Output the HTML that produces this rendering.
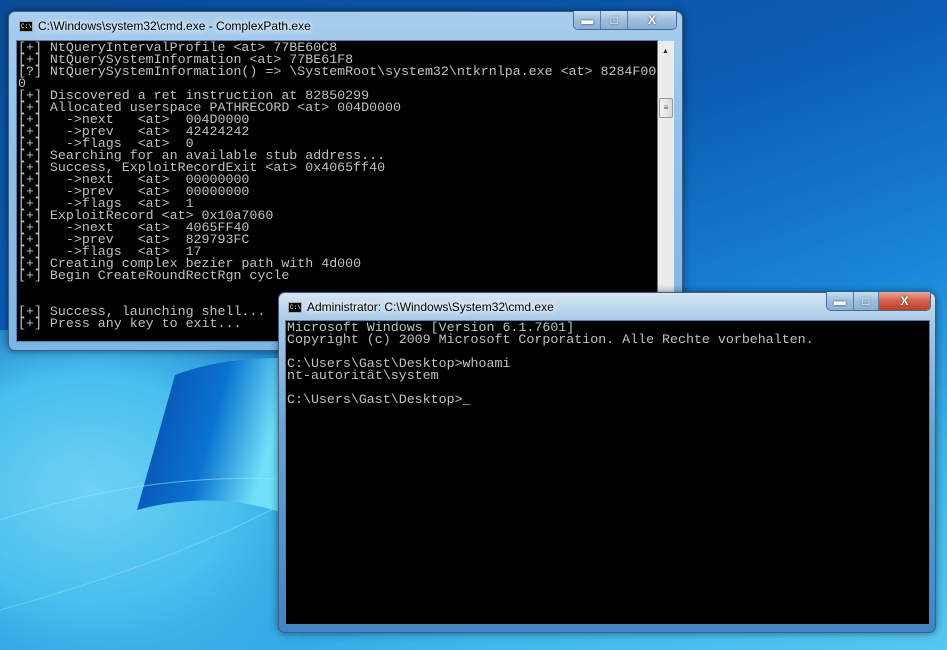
<!DOCTYPE html>
<html><head><meta charset="utf-8"><style>
*{margin:0;padding:0;box-sizing:border-box}
body{width:947px;height:650px;overflow:hidden;position:relative;
background:linear-gradient(160deg,#0a4c98 0%,#0b5cb4 35%,#1a86d8 60%,#3ab4ea 80%,#56c8f0 100%);font-family:"Liberation Sans",sans-serif}
.bgl{position:absolute;left:0;top:330px;width:300px;height:320px;background:radial-gradient(ellipse at 30% 50%,#6fd2f4 0%,#48bfee 50%,rgba(40,160,230,0) 100%)}
.win{position:absolute;border-radius:7px;border:1px solid #3d5f82;box-shadow:0 0 8px rgba(0,0,0,.5)}
.title{position:absolute;font-size:12px;color:#000;white-space:nowrap;text-shadow:0 0 6px #fff,0 0 8px #fff}
.ico{position:absolute;width:14px;height:11px;background:#000;border:1px solid #aaa;font-size:6px;color:#fff;line-height:9px;padding-left:1px;font-family:"Liberation Mono",monospace}
.con{position:absolute;background:#000;border:1px solid #5d7fa3;font-family:"Liberation Mono",monospace;font-size:13.3px;line-height:12px;color:#c0c0c0;white-space:pre;overflow:hidden;padding:1px 0 0 1px;letter-spacing:0}
.btns{position:absolute;height:19px;border:1px solid #4a6c90;border-top:none;border-radius:0 0 5px 5px;display:flex;overflow:hidden}
.btns div{height:18px;border-right:1px solid #5a7ea2;background:linear-gradient(#c9dcef,#9ebedf 50%,#8ab0d6);display:flex;align-items:center;justify-content:center;font-size:12px;font-weight:bold;color:#fff;text-shadow:0 0 2px #333}
.btns div:last-child{border-right:none}
</style></head><body>
<div class="bgl"></div>
<svg style="position:absolute;left:0;top:0" width="947" height="650">
<defs><linearGradient id="fl" x1="0" y1="0" x2="1" y2="0.3"><stop offset="0" stop-color="#0748a8"/><stop offset="0.6" stop-color="#0a72d0"/><stop offset="1" stop-color="#6ee0f8"/></linearGradient></defs>
<path d="M175 375 Q220 358 280 358 L280 512 Q210 490 137 510 Z" fill="url(#fl)"/>
<path d="M0 520 Q150 470 300 480" stroke="#9fe0f8" stroke-width="1" fill="none" opacity=".6"/>
<path d="M0 610 Q180 560 290 500" stroke="#9fe0f8" stroke-width="1" fill="none" opacity=".5"/>
</svg>

<!-- window 1 -->
<div class="win" style="left:8px;top:11px;width:675px;height:340px;background:linear-gradient(180deg,#a8cdee,#8ec0ea 40%,#7cb6e6)"></div>
<div class="ico" style="left:19px;top:21px">C:\</div>
<div class="title" style="left:38px;top:19px">C:\Windows\system32\cmd.exe - ComplexPath.exe</div>
<div class="btns" style="left:573px;top:11px;width:104px"><div style="width:28px">▬</div><div style="width:27px">□</div><div style="width:49px">X</div></div>
<div class="con" style="left:16px;top:40px;width:642px;height:302px">[+] NtQueryIntervalProfile &lt;at&gt; 77BE60C8
[+] NtQuerySystemInformation &lt;at&gt; 77BE61F8
[?] NtQuerySystemInformation() =&gt; \SystemRoot\system32\ntkrnlpa.exe &lt;at&gt; 8284F00
0
[+] Discovered a ret instruction at 82850299
[+] Allocated userspace PATHRECORD &lt;at&gt; 004D0000
[+]   -&gt;next   &lt;at&gt;  004D0000
[+]   -&gt;prev   &lt;at&gt;  42424242
[+]   -&gt;flags  &lt;at&gt;  0
[+] Searching for an available stub address...
[+] Success, ExploitRecordExit &lt;at&gt; 0x4065ff40
[+]   -&gt;next   &lt;at&gt;  00000000
[+]   -&gt;prev   &lt;at&gt;  00000000
[+]   -&gt;flags  &lt;at&gt;  1
[+] ExploitRecord &lt;at&gt; 0x10a7060
[+]   -&gt;next   &lt;at&gt;  4065FF40
[+]   -&gt;prev   &lt;at&gt;  829793FC
[+]   -&gt;flags  &lt;at&gt;  17
[+] Creating complex bezier path with 4d000
[+] Begin CreateRoundRectRgn cycle


[+] Success, launching shell...
[+] Press any key to exit...</div>
<div style="position:absolute;left:658px;top:41px;width:16px;height:300px;background:#ececec"></div>
<div style="position:absolute;left:662px;top:48px;font-size:7px;color:#333">▲</div>
<div style="position:absolute;left:659px;top:98px;width:14px;height:20px;background:linear-gradient(90deg,#f4f4f4,#d8d8d8);border:1px solid #999;border-radius:2px;font-size:8px;text-align:center;line-height:18px;color:#555">≡</div>

<!-- window 2 -->
<div class="win" style="left:278px;top:292px;width:658px;height:341px;background:linear-gradient(180deg,#d6e6f4,#a9c9e8 8%,#6aa2d6 40%,#3f85c8)"></div>
<div class="ico" style="left:288px;top:302px">C:\</div>
<div class="title" style="left:307px;top:300px">Administrator: C:\Windows\System32\cmd.exe</div>
<div class="btns" style="left:826px;top:292px;width:105px"><div style="width:27px">▬</div><div style="width:26px">□</div><div style="width:52px;background:linear-gradient(#e8a898,#d4604a 50%,#c0402a)">X</div></div>
<div class="con" style="left:285px;top:320px;width:645px;height:305px">Microsoft Windows [Version 6.1.7601]
Copyright (c) 2009 Microsoft Corporation. Alle Rechte vorbehalten.

C:\Users\Gast\Desktop&gt;whoami
nt-autorität\system

C:\Users\Gast\Desktop&gt;_</div>
</body></html>
